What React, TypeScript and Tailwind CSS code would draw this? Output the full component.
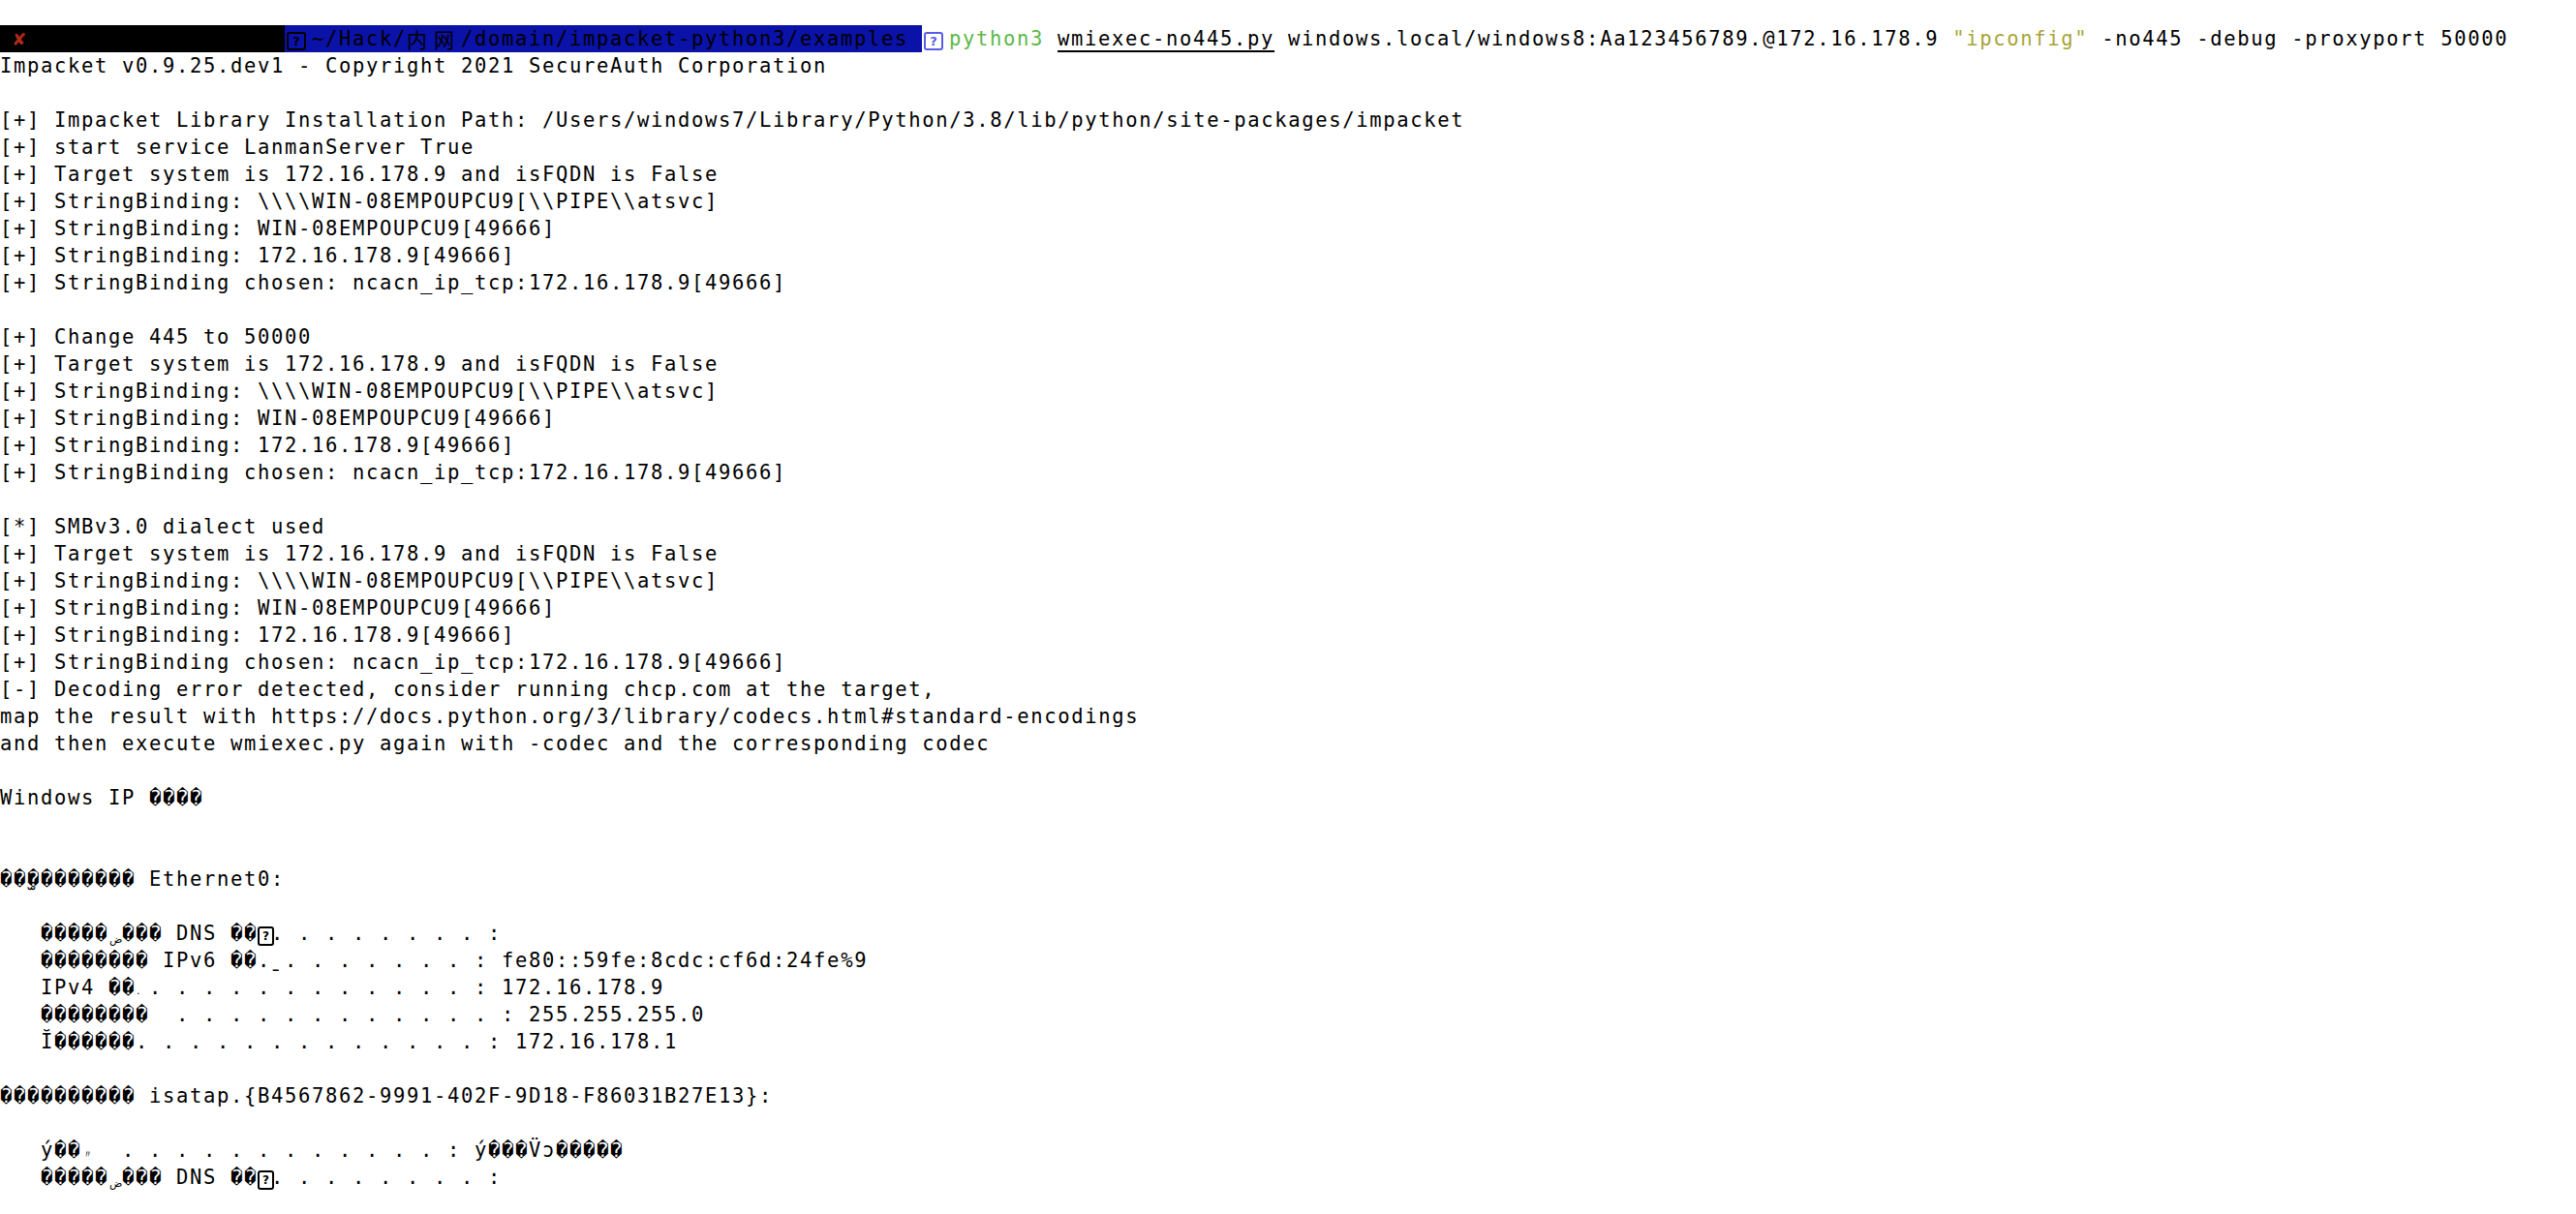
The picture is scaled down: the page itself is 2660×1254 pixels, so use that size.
import React from "react";

const D = "\uFFFD";
const rep = (n: number) => D.repeat(n);

function Box({ color = "border-black text-black", small = false }: { color?: string; small?: boolean }) {
  return (
    <span
      className={`inline-block align-top ${small ? "w-[14px]" : "w-[28px]"} h-[28px] tracking-normal`}
    >
      <span
        className={`mt-[7px] flex items-center justify-center border-2 rounded-[3px] font-bold ${color} ${
          small ? "w-[17px] h-[20px] text-[12px]" : "ml-[2px] w-[20px] h-[19px] text-[13px]"
        }`}
        style={{ fontFamily: '"DejaVu Sans", sans-serif' }}
      >
        ?
      </span>
    </span>
  );
}

function Small({ ch, cls = "" }: { ch: string; cls?: string }) {
  return (
    <span className="inline-block w-[14px] tracking-normal align-top h-[28px] relative">
      <span
        className={`absolute left-[1px] text-[11px] leading-none ${cls}`}
        style={{ fontFamily: '"DejaVu Sans", sans-serif' }}
      >
        {ch}
      </span>
    </span>
  );
}

function CJK({ ch }: { ch: string }) {
  return (
    <span
      className="inline-block w-[28px] text-[21px] tracking-normal align-top leading-[28px]"
      style={{ fontFamily: '"Noto Sans CJK SC", sans-serif' }}
    >
      {ch}
    </span>
  );
}

function L({ children }: { children?: React.ReactNode }) {
  return <div className="h-[28px] leading-[28px] whitespace-pre">{children ?? " "}</div>;
}

const target = [
  "[+] Target system is 172.16.178.9 and isFQDN is False",
  "[+] StringBinding: \\\\\\\\WIN-08EMPOUPCU9[\\\\PIPE\\\\atsvc]",
  "[+] StringBinding: WIN-08EMPOUPCU9[49666]",
  "[+] StringBinding: 172.16.178.9[49666]",
  "[+] StringBinding chosen: ncacn_ip_tcp:172.16.178.9[49666]",
];

export default function App() {
  return (
    <div
      className="w-[2660px] h-[1254px] bg-white text-black pt-[26px] text-[20.5px] tracking-[1.66px] overflow-hidden"
      style={{ fontFamily: '"DejaVu Sans Mono", monospace' }}
    >
      {/* prompt */}
      <div className="h-[28px] leading-[28px] whitespace-pre flex">
        <span className="inline-block w-[294px] h-[28px] bg-black">
          <span className="text-[#b3291b]"> {"\u2718"}</span>
        </span>
        <span className="inline-block w-[658px] h-[28px] bg-[#0b12a8] text-black">
          <Box />
          {"~/Hack/"}
          <CJK ch="内" />
          <CJK ch="网" />
          {"/domain/impacket-python3/examples "}
        </span>
        <Box color="border-[#5a5ce6] text-[#5a5ce6]" />
        <span className="text-[#5cb848]">python3</span>
        <span> </span>
        <span className="underline decoration-2 underline-offset-[5px]">wmiexec-no445.py</span>
        <span> windows.local/windows8:Aa123456789.@172.16.178.9 </span>
        <span className="text-[#a7a53a]">"ipconfig"</span>
        <span> -no445 -debug -proxyport 50000</span>
      </div>
      <L>Impacket v0.9.25.dev1 - Copyright 2021 SecureAuth Corporation</L>
      <L />
      <L>[+] Impacket Library Installation Path: /Users/windows7/Library/Python/3.8/lib/python/site-packages/impacket</L>
      <L>[+] start service LanmanServer True</L>
      {target.map((t, i) => (
        <L key={"a" + i}>{t}</L>
      ))}
      <L />
      <L>[+] Change 445 to 50000</L>
      {target.map((t, i) => (
        <L key={"b" + i}>{t}</L>
      ))}
      <L />
      <L>[*] SMBv3.0 dialect used</L>
      {target.map((t, i) => (
        <L key={"c" + i}>{t}</L>
      ))}
      <L>[-] Decoding error detected, consider running chcp.com at the target,</L>
      <L>map the result with https://docs.python.org/3/library/codecs.html#standard-encodings</L>
      <L>and then execute wmiexec.py again with -codec and the corresponding codec</L>
      <L />
      <L>Windows IP {rep(4)}</L>
      <L />
      <L />
      <L>
        {D + D + "\u032B" + rep(8)} Ethernet0:
      </L>
      <L />
      <L>
        {"   " + rep(5)}
        <Small ch={"\u0636"} cls="top-[15px]" />
        {rep(3) + " DNS " + rep(2)}
        <Box small />
        {". . . . . . . . :"}
      </L>
      <L>{"   " + rep(8) + " IPv6 " + rep(2) + ".\u0331 . . . . . . . : fe80::59fe:8cdc:cf6d:24fe%9"}</L>
      <L>
        {"   IPv4 " + rep(2)}
        <Small ch="." cls="top-[12px]" />
        {". . . . . . . . . . . . : 172.16.178.9"}
      </L>
      <L>{"   " + rep(8) + "  . . . . . . . . . . . . : 255.255.255.0"}</L>
      <L>{"   \u012C" + rep(6) + ". . . . . . . . . . . . . : 172.16.178.1"}</L>
      <L />
      <L>{rep(10) + " isatap.{B4567862-9991-402F-9D18-F86031B27E13}:"}</L>
      <L />
      <L>
        {"   \u00FD" + rep(2)}
        <Small ch={"\u3003"} cls="top-[13px] text-[9px]" />
        {"  . . . . . . . . . . . . : \u00FD" + rep(3) + "V\u0308\u0254" + rep(5)}
      </L>
      <L>
        {"   " + rep(5)}
        <Small ch={"\u0636"} cls="top-[15px]" />
        {rep(3) + " DNS " + rep(2)}
        <Box small />
        {". . . . . . . . :"}
      </L>
    </div>
  );
}
